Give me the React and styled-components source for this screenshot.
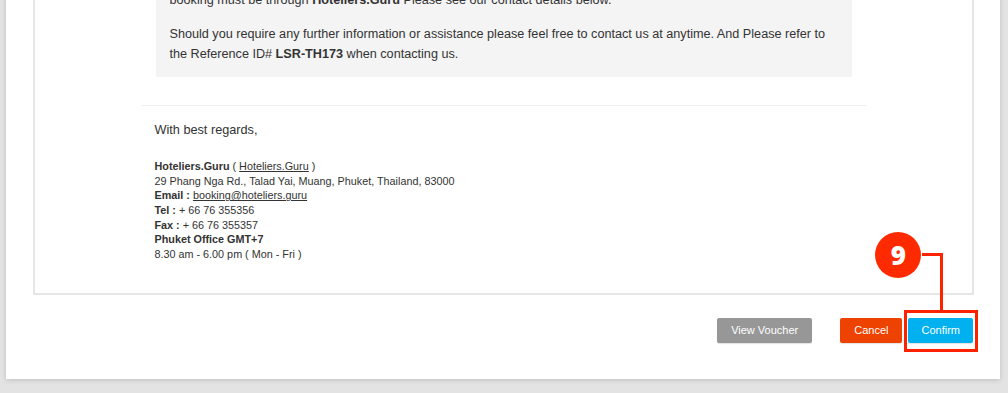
import React from "react";
import styled, { createGlobalStyle } from "styled-components";

const GlobalStyle = createGlobalStyle`
  html, body { margin: 0; padding: 0; }
  body {
    background: #e3e3e3;
    font-family: "Liberation Sans", Arial, Helvetica, sans-serif;
    color: #333;
    overflow: hidden;
  }
`;

const Page = styled.div`
  margin-top: -59px;
  padding: 0 8px 15px 6px;
`;

const Panel = styled.div`
  background: #fff;
  box-shadow: 0 1px 5px rgba(0, 0, 0, 0.16);
  padding: 20px 26px 36px 27px;
`;

const MailBox = styled.div`
  border: 2px solid #e6e6e6;
`;

const Column = styled.div`
  width: 724px;
  margin: 0 auto;
  padding-top: 14px;
`;

const InfoBox = styled.div`
  background: #f4f4f4;
  margin: 0 14px 28px;
  padding: 13px 14px;
  font-size: 12.65px;
  line-height: 20px;
`;

const Para = styled.p`
  margin: 0 0 ${(p) => (p.$last ? 0 : 14)}px;
`;

const Footer = styled.div`
  border-top: 1px solid #ededed;
  padding: 14px 14px 31px 13px;
`;

const Regards = styled.p`
  margin: 0 0 19px;
  font-size: 12.7px;
  line-height: 20px;
`;

const Signature = styled.div`
  font-size: 10.8px;
  line-height: 14.67px;
`;

const Line = styled.div``;

const Link = styled.a`
  color: #333;
  text-decoration: underline;
`;

const Actions = styled.div`
  display: flex;
  justify-content: flex-end;
  align-items: center;
  margin-top: 23px;
  padding-right: 1px;
`;

const Button = styled.button`
  height: 25px;
  padding: 0 ${(p) => p.$px || 14}px;
  border: none;
  border-radius: 2px;
  background: ${(p) => p.$bg};
  color: #fff;
  font-family: "Liberation Sans", Arial, sans-serif;
  font-size: 11px;
  margin-left: ${(p) => p.$ml || 0}px;
  box-shadow: 0 1px 1px rgba(0, 0, 0, 0.12);
  cursor: pointer;
`;

const Highlight = styled.div`
  position: relative;
  margin-left: 6px;
  display: flex;
`;

const HighlightBox = styled.div`
  position: absolute;
  left: -4px;
  top: -8px;
  right: -5px;
  bottom: -9px;
  border: 3px solid #ff2200;
  pointer-events: none;
`;

const Connector = styled.div`
  position: absolute;
  left: 14px;
  top: -65px;
  width: 21px;
  height: 57px;
  border-top: 3px solid #ff2200;
  border-right: 3px solid #ff2200;
  box-sizing: border-box;
`;

const Badge = styled.div`
  position: absolute;
  left: -33px;
  top: -86px;
  width: 46px;
  height: 46px;
  border-radius: 50%;
  background: #ff2a00;
  color: #fff;
  display: flex;
  align-items: center;
  justify-content: center;
  font-family: "Open Sans", sans-serif;
  font-weight: 800;
  font-size: 26px;
  line-height: 1;
`;

export default function App() {
  return (
    <>
      <GlobalStyle />
      <Page>
        <Panel>
          <MailBox>
            <Column>
              <InfoBox>
                <Para>
                  booking must be through <b>Hoteliers.Guru</b> Please see our contact details below.
                </Para>
                <Para $last>
                  Should you require any further information or assistance please feel free to contact us at anytime. And Please refer to the Reference ID# <b>LSR-TH173</b> when contacting us.
                </Para>
              </InfoBox>
              <Footer>
                <Regards>With best regards,</Regards>
                <Signature>
                  <Line>
                    <b>Hoteliers.Guru</b> ( <Link href="#">Hoteliers.Guru</Link> )
                  </Line>
                  <Line>29 Phang Nga Rd., Talad Yai, Muang, Phuket, Thailand, 83000</Line>
                  <Line>
                    <b>Email :</b> <Link href="#">booking@hoteliers.guru</Link>
                  </Line>
                  <Line>
                    <b>Tel :</b> + 66 76 355356
                  </Line>
                  <Line>
                    <b>Fax :</b> + 66 76 355357
                  </Line>
                  <Line>
                    <b>Phuket Office GMT+7</b>
                  </Line>
                  <Line>8.30 am - 6.00 pm ( Mon - Fri )</Line>
                </Signature>
              </Footer>
            </Column>
          </MailBox>
          <Actions>
            <Button $bg="#979797" $px={14}>View Voucher</Button>
            <Button $bg="#ee4200" $ml={28} $px={14}>Cancel</Button>
            <Highlight>
              <Button $bg="#00b0ef" $px={13}>Confirm</Button>
              <HighlightBox />
              <Connector />
              <Badge>9</Badge>
            </Highlight>
          </Actions>
        </Panel>
      </Page>
    </>
  );
}
